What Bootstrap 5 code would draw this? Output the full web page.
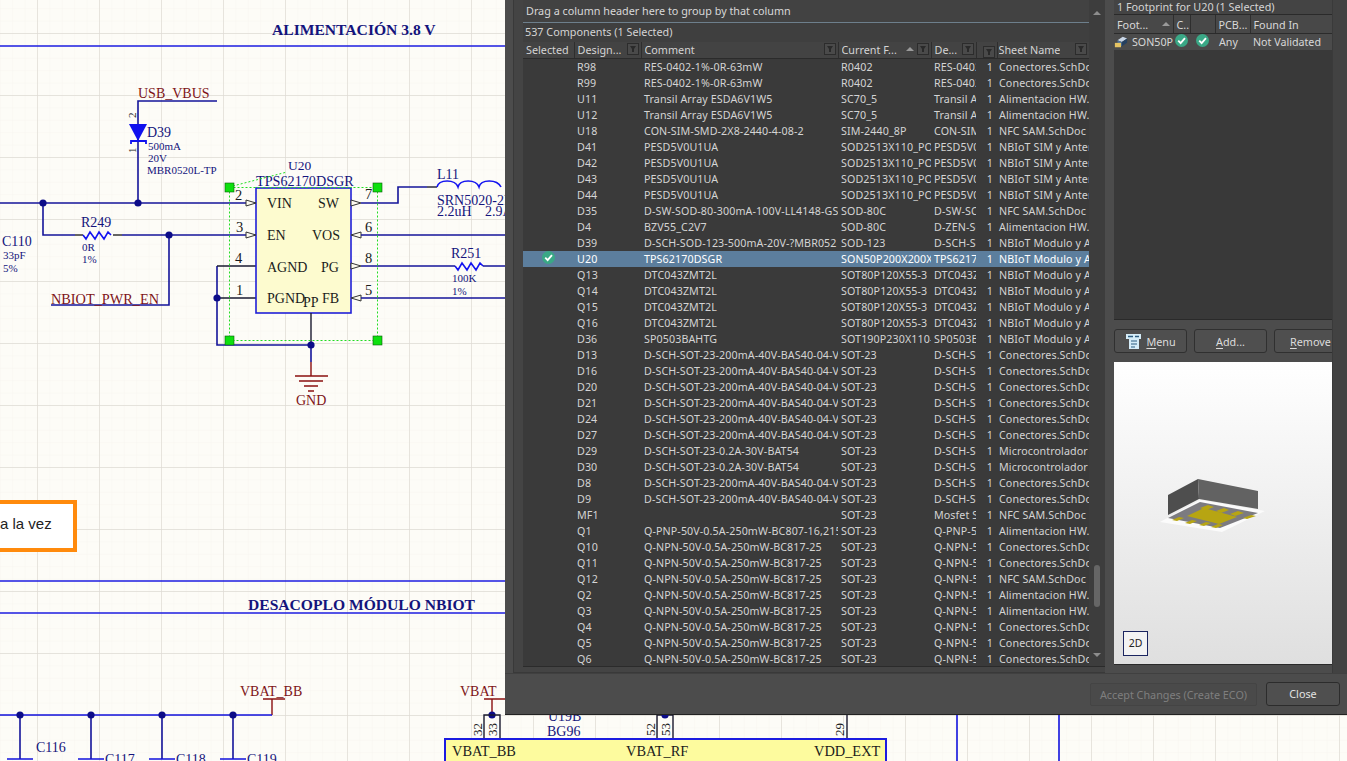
<!DOCTYPE html>
<html lang="en">
<head>
    <meta charset="UTF-8">
    <meta name="viewport" content="width=device-width, initial-scale=1.0">
    <title>Components</title>
    <link href="https://cdn.jsdelivr.net/npm/bootstrap@5.3.0/dist/css/bootstrap.min.css" rel="stylesheet">
    <style>
        html, body { height: 100%; overflow: hidden; background: #fdfbf5; }
        .stage { width: 1347px; height: 761px; overflow: hidden; }
        .sheet { display: block; }
        .sheet text { font-family: "Liberation Serif", serif; }
        .wire { stroke: #15159a; stroke-width: 1.6; fill: none; }
        .wire-b { stroke: #1212dd; stroke-width: 1.6; fill: none; }
        .pin { stroke: #1a1a30; stroke-width: 1.4; fill: none; }
        .rule { stroke: #1c1ce0; stroke-width: 1.6; }
        .node { fill: #0c0c88; }
        .red { stroke: #8a1010; stroke-width: 1.4; fill: none; }
        .t-navy { fill: #14147c; }
        .t-red { fill: #7e1418; }
        .t-blk { fill: #1b1b1b; }
        .handle { fill: #0ee00e; stroke: #0a5a0a; stroke-width: .6; }
        .tick { fill: #fdfbf0; stroke: #333; stroke-width: 1; }

        .dlg { position: absolute; left: 505px; top: 0; width: 842px; height: 715px; background: #4c4c4c; border-bottom: 1px solid #222; font-family: "Noto Sans", sans-serif; font-size: 10.7px; color: #d4d4d4; line-height: 16px; }
        .dlg-main { height: 673px; }
        .left-pane { width: 600px; height: 673px; padding-left: 8px; }
        .left-in { height: 673px; padding: 0 0 8px 9px; background: #444; border-left: 1px solid #393939; border-bottom: 1px solid #393939; width: 592px; }
        .grid-wrap { width: 582px; background: #3a3a3a; border-bottom: 1px solid #2b2b2b; }
        .grid-col { width: 566px; }
        .group-bar { height: 23px; padding: 3px 3px 0; background: #424242; border-bottom: 1px solid #6d7f8c; font-size: 10.8px; color: #d8d8d8; }
        .count-bar { height: 19px; padding: 1px 2px; background: #3f3f3f; font-size: 10.8px; }
        .cmp-table { table-layout: fixed; width: 566px; margin: 0; color: #d4d4d4; --bs-table-bg: transparent; --bs-table-color: #d4d4d4; border-color: transparent; }
        .cmp-table th { height: 16px; padding: 0 2px 0 3px; background: #434343; font-weight: 400; border-left: 1px solid #2e2e2e; border-bottom: 1px solid #2b2b2b; font-size: 10.8px; }
        .cmp-table th:first-child { border-left: 0; }
        .cmp-table th:last-child { padding-left: 1px; }
        .cmp-table td { height: 16px; padding: 0 0 0 3px; white-space: nowrap; overflow: hidden; line-height: 16px; letter-spacing: .1px; }
        .cmp-table td:first-child { padding: 0; }
        .cmp-table td:last-child { padding-left: 2px; }
        .cmp-table tr.picked td { --bs-table-bg: #5c7e9d; --bs-table-color: #fff; background: #5c7e9d; color: #fff; }
        .cmp-table td.num { text-align: right; padding-right: 4px; }
        .cell-clip { white-space: nowrap; overflow: hidden; min-width: 0; }
        .funnel { flex: none; width: 12px; height: 12px; margin-top: 1px; display: block; }
        .sort-up { flex: none; width: 0; height: 0; border: 4px solid transparent; border-top: 0; border-bottom: 4px solid #9a9a9a; margin: 5px 3px 0 0; }
        .rows-box { height: 607px; overflow: hidden; }
        .scroll-col { width: 16px; background: #3d3d3d; }
        .arrow-top { width: 0; height: 0; border: 4px solid transparent; border-top: 0; border-bottom: 4px solid #8d8d8d; margin: 11px auto 0; }
        .thumb { width: 6px; height: 42px; border-radius: 3px; background: #666; margin: 550px auto 0; }
        .arrow-bot { width: 0; height: 0; border: 4px solid transparent; border-bottom: 0; border-top: 4px solid #8d8d8d; margin: 46px auto 0; }

        .right-pane { width: 218px; margin-left: 9px; }
        .right-edge { width: 15px; background: #424242; border-left: 1px solid #3a3a3a; }
        .fp-title { height: 14px; line-height: 14px; padding-left: 3px; background: #444; font-size: 10.8px; }
        .fp-box { height: 306px; background: #393939; border-bottom: 1px solid #2a2a2a; border-top: 1px solid #2a2a2a; }
        .fp-table { table-layout: fixed; width: 218px; margin: 0; --bs-table-bg: transparent; --bs-table-color: #d8d8d8; color: #d8d8d8; }
        .fp-table th { height: 18px; padding: 0 0 0 3px; background: #484848; font-weight: 400; border-left: 1px solid #2e2e2e; border-bottom: 1px solid #2b2b2b; font-size: 10.8px; white-space: nowrap; overflow: hidden; }
        .fp-table th:first-child { border-left: 0; }
        .fp-table td { height: 17px; padding: 0 0 0 3px; background: #4b4b4b; white-space: nowrap; overflow: hidden; line-height: 16px; }
        .fp-btns { height: 42px; padding-top: 9px; width: 221px; overflow: hidden; gap: 7px; }
        .ui-btn { flex: none; width: 73px; height: 24px; padding: 0; background: #4f4f4f; border: 1px solid #303030; border-radius: 3px; color: #dcdcdc; font-size: 10.8px; line-height: 21px; }
        .ui-btn u { text-underline-offset: 2px; }
        .btn-remove { text-align: left; padding-left: 15px; }
        .preview { position: relative; width: 218px; height: 303px; background: linear-gradient(#fff, #dfdfdf); border-bottom: 1px solid #2a2a2a; }
        .preview svg { display: block; }
        .btn-2d { position: absolute; left: 9px; bottom: 8px; width: 25px; height: 25px; background: #f3f3f3; border: 1px solid #1b2560; color: #222; font-size: 10.5px; line-height: 23px; text-align: center; }
        .dlg-foot { height: 41px; padding: 8px 7px 0 0; gap: 9px; background: #4c4c4c; border-top: 1px solid #404040; }
        .btn-accept { width: 167px; height: 23px; margin-top: 1px; background: #4a4a4a; border: 1px solid #444; border-radius: 2px; color: #7f7f7f; font-size: 10.8px; line-height: 20px; padding: 0; }
        .btn-close-dlg { width: 74px; height: 24px; background: #4f4f4f; border: 1px solid #2c2c2c; border-radius: 3px; color: #e2e2e2; font-size: 10.8px; line-height: 20px; padding: 0; }
    </style>
</head>
<body>
<div class="stage position-relative">

    <!-- schematic canvas -->
    <svg class="sheet" width="1347" height="761" viewBox="0 0 1347 761" xmlns="http://www.w3.org/2000/svg">
        <defs>
            <pattern id="gridMinor" x="37" y="33" width="12.4" height="12.4" patternUnits="userSpaceOnUse">
                <path d="M0 0H12.4M0 0V12.4" stroke="#f7f5ef" stroke-width="1" fill="none"/>
            </pattern>
            <pattern id="gridMajor" x="37" y="33" width="62" height="62" patternUnits="userSpaceOnUse">
                <path d="M0 0H62M0 0V62" stroke="#dedbd5" stroke-width="1.4" fill="none"/>
            </pattern>
        </defs>
        <rect width="1347" height="761" fill="#fdfcf7"/>
        <rect width="1347" height="761" fill="url(#gridMinor)"/>
        <rect width="1347" height="761" fill="url(#gridMajor)"/>

        <!-- section rules -->
        <line class="rule" x1="0" y1="46" x2="505" y2="46"/>
        <line class="rule" x1="0" y1="581" x2="505" y2="581"/>
        <line class="rule" x1="0" y1="613" x2="505" y2="613"/>
        <text class="t-navy" x="272" y="35" font-size="15.6" font-weight="700">ALIMENTACIÓN 3.8 V</text>
        <text class="t-navy" x="248" y="610" font-size="15.6" font-weight="700">DESACOPLO MÓDULO NBIOT</text>

        <!-- USB_VBUS and D39 -->
        <text class="t-red" x="138" y="98" font-size="14">USB_VBUS</text>
        <path class="wire" d="M217 101H138V203"/>
        <text class="t-blk" font-size="11" transform="translate(136 118) rotate(-90)">2</text>
        <text class="t-blk" font-size="11" transform="translate(136 153) rotate(-90)">1</text>
        <path d="M129 124H147L138 141Z" fill="#1010ee"/>
        <path d="M131 144V141H146V144" stroke="#1010ee" stroke-width="1.8" fill="none"/>
        <text class="t-navy" x="147" y="137" font-size="14">D39</text>
        <text class="t-navy" x="148" y="150" font-size="11">500mA</text>
        <text class="t-navy" x="148" y="162" font-size="11">20V</text>
        <text class="t-navy" x="147" y="174" font-size="11">MBR0520L-TP</text>

        <!-- supply wires on the left -->
        <path class="wire" d="M0 203H256"/>
        <path class="wire" d="M43 203V235H75"/>
        <path class="wire" d="M122 235H256"/>
        <path class="wire" d="M169 235V305H51"/>
        <path d="M75 235H83M113 235H122" stroke="#333" stroke-width="1.4"/>
        <path d="M83 235l3 4 4-7 5 7 4-7 5 7 4-7 3 3" stroke="#1414f0" stroke-width="1.6" fill="none"/>
        <circle class="node" cx="43" cy="203" r="3.6"/>
        <circle class="node" cx="138" cy="203" r="3.6"/>
        <circle class="node" cx="169" cy="235" r="3.6"/>
        <text class="t-navy" x="81" y="227" font-size="14">R249</text>
        <text class="t-navy" x="82" y="251" font-size="11">0R</text>
        <text class="t-navy" x="82" y="263" font-size="11">1%</text>
        <text class="t-navy" x="2" y="246" font-size="14">C110</text>
        <text class="t-navy" x="3" y="259" font-size="11">33pF</text>
        <text class="t-navy" x="3" y="272" font-size="11">5%</text>
        <text class="t-red" x="51" y="304" font-size="14.3">NBIOT_PWR_EN</text>

        <!-- U20 -->
        <path class="wire" d="M217 266V345H311"/>
        <path class="pin" d="M217 266H256M217 298H256"/>
        <circle class="node" cx="217" cy="298" r="3.6"/>
        <rect x="256" y="188" width="95" height="125" fill="#fdfbcf" stroke="#2020d8" stroke-width="1.6"/>
        <text class="t-navy" x="288" y="170" font-size="13.5">U20</text>
        <text class="t-navy" x="256" y="186" font-size="14.2">TPS62170DSGR</text>
        <g class="t-blk" font-size="14">
            <text x="267" y="208">VIN</text><text x="318" y="208">SW</text>
            <text x="267" y="240">EN</text><text x="312" y="240">VOS</text>
            <text x="267" y="272">AGND</text><text x="321" y="272">PG</text>
            <text x="267" y="303">PGND</text><text x="322" y="303">FB</text>
            <text x="303" y="307">PP</text>
        </g>
        <g class="t-blk" font-size="14.5">
            <text x="235" y="200">2</text><text x="236" y="232">3</text><text x="235" y="263">4</text><text x="236" y="295">1</text>
            <text x="365" y="199">7</text><text x="365" y="232">6</text><text x="365" y="263">8</text><text x="365" y="295">5</text>
        </g>
        <path class="tick" d="M246 200L256 203L246 206Z"/>
        <path class="tick" d="M246 232L256 235L246 238Z"/>
        <path class="tick" d="M351 200L361 203L351 206Z"/>
        <path class="tick" d="M361 232L351 235L361 238Z"/>
        <path class="tick" d="M351 263L361 266L351 269Z"/>
        <path class="tick" d="M361 295L351 298L361 301Z"/>

        <!-- outputs -->
        <path class="wire" d="M361 203H398V187H427"/>
        <path class="pin" d="M427 187H437"/>
        <path d="M437 187c2-8 18-8 21 0c2-8 18-8 21 0c2-8 18-8 22 0" stroke="#1414f0" stroke-width="1.6" fill="none"/>
        <text class="t-navy" x="437" y="179" font-size="14">L11</text>
        <text class="t-navy" x="437" y="205" font-size="14">SRN5020-2R2M</text>
        <text class="t-navy" x="437" y="216" font-size="14">2.2uH</text>
        <text class="t-navy" x="485" y="216" font-size="14">2.9A</text>
        <path class="wire" d="M361 235H505"/>
        <path class="wire" d="M361 266H447"/>
        <path d="M455 266l3 4 4-7 5 7 4-7 5 7 4-7 3 3" stroke="#1414f0" stroke-width="1.6" fill="none"/>
        <path class="wire" d="M447 266H455M483 266H505"/>
        <path class="wire" d="M361 298H505"/>
        <text class="t-navy" x="451" y="258" font-size="14">R251</text>
        <text class="t-navy" x="452" y="282" font-size="11">100K</text>
        <text class="t-navy" x="452" y="295" font-size="11">1%</text>

        <!-- ground -->
        <path class="pin" d="M311 313V345"/>
        <path class="wire" d="M311 345V362"/>
        <path class="red" d="M311 362V376M295 376H328M299 381H323M304 386H318M308 391H314"/>
        <circle class="node" cx="311" cy="345" r="3.6"/>
        <text class="t-red" x="296" y="405" font-size="14">GND</text>

        <!-- selection -->
        <rect x="229.5" y="187.5" width="148" height="153" fill="none" stroke="#22dd22" stroke-width="1" stroke-dasharray="2 2"/>
        <line x1="229" y1="187" x2="287" y2="172" stroke="#22dd22" stroke-width="1" stroke-dasharray="2 2"/>
        <rect class="handle" x="225" y="183" width="9" height="9"/>
        <rect class="handle" x="373" y="183" width="9" height="9"/>
        <rect class="handle" x="225" y="336" width="9" height="9"/>
        <rect class="handle" x="373" y="336" width="9" height="9"/>

        <!-- note -->
        <rect x="-10" y="502" width="85" height="48" fill="#fff" stroke="#ff8a0c" stroke-width="4"/>
        <text x="0" y="529" font-size="15" fill="#222" style="font-family:'Liberation Sans',sans-serif">a la vez</text>

        <!-- decoupling -->
        <text class="t-red" x="240" y="696" font-size="14">VBAT_BB</text>
        <path class="red" d="M263 699H285M272 699V715"/>
        <path class="wire-b" d="M0 715H272"/>
        <path class="wire" d="M20 715V759M91 715V759M162 715V759M233 715V759"/>
        <path class="wire-b" d="M7 759H33M78 759H104M149 759H175M220 759H246"/>
        <circle class="node" cx="20" cy="715" r="3.6"/>
        <circle class="node" cx="91" cy="715" r="3.6"/>
        <circle class="node" cx="162" cy="715" r="3.6"/>
        <circle class="node" cx="233" cy="715" r="3.6"/>
        <text class="t-navy" x="36" y="752" font-size="14">C116</text>
        <text class="t-navy" x="36" y="769" font-size="11">10uF</text>
        <text class="t-navy" x="105" y="764" font-size="14">C117</text>
        <text class="t-navy" x="176" y="764" font-size="14">C118</text>
        <text class="t-navy" x="247" y="764" font-size="14">C119</text>

        <!-- U19B -->
        <text class="t-red" x="460" y="696" font-size="14">VBAT</text>
        <path class="red" d="M484 699H506M492 699V715"/>
        <circle class="node" cx="492" cy="715" r="3.6"/>
        <path class="pin" d="M484 739V715H500V739M657 739V715H673V739M847 739V715"/>
        <circle class="node" cx="665" cy="715" r="3.6"/>
        <g class="t-blk" font-size="13">
            <text transform="translate(482 736) rotate(-90)">32</text>
            <text transform="translate(497 736) rotate(-90)">33</text>
            <text transform="translate(655 736) rotate(-90)">52</text>
            <text transform="translate(670 736) rotate(-90)">53</text>
            <text transform="translate(844 736) rotate(-90)">29</text>
        </g>
        <text class="t-navy" x="548" y="721" font-size="14">U19B</text>
        <text class="t-navy" x="547" y="736" font-size="14">BG96</text>
        <rect x="445" y="739" width="441" height="40" fill="#fdfb9e" stroke="#1c1ce0" stroke-width="2"/>
        <g class="t-blk" font-size="14.4">
            <text x="452" y="756">VBAT_BB</text>
            <text x="626" y="756">VBAT_RF</text>
            <text x="814" y="756">VDD_EXT</text>
        </g>
        <path class="wire-b" d="M957 715V761M1059 715V761"/>
    </svg>

    <!-- components dialog, floats over the schematic -->
    <div class="dlg">
        <div class="dlg-main d-flex">
            <div class="left-pane">
                <div class="left-in">
                    <div class="grid-wrap d-flex">
                        <div class="grid-col">
                            <div class="group-bar">Drag a column header here to group by that column</div>
                            <div class="count-bar">537 Components (1 Selected)</div>
                            <table class="table table-borderless cmp-table">
                                <colgroup><col style="width:51px"><col style="width:67px"><col style="width:197px"><col style="width:93px"><col style="width:45px"><col style="width:21px"><col style="width:92px"></colgroup>
                                <thead>
                                    <tr>
                                        <th>Selected</th>
                                        <th><div class="d-flex justify-content-between"><span class="cell-clip">Design...</span><svg class="funnel"><use href="#funnelIcon"/></svg></div></th>
                                        <th><div class="d-flex justify-content-between"><span class="cell-clip">Comment</span><svg class="funnel"><use href="#funnelIcon"/></svg></div></th>
                                        <th><div class="d-flex justify-content-between"><span class="cell-clip">Current F...</span><span class="d-flex"><span class="sort-up"></span><svg class="funnel"><use href="#funnelIcon"/></svg></span></div></th>
                                        <th><div class="d-flex justify-content-between"><span class="cell-clip">De...</span><svg class="funnel"><use href="#funnelIcon"/></svg></div></th>
                                        <th><div class="d-flex justify-content-end"><svg class="funnel"><use href="#funnelIcon"/></svg></div></th>
                                        <th><div class="d-flex justify-content-between"><span class="cell-clip">Sheet Name</span><svg class="funnel"><use href="#funnelIcon"/></svg></div></th>
                                    </tr>
                                </thead>
                            </table>
                            <div class="rows-box">
                                <table class="table table-borderless cmp-table">
                                    <colgroup><col style="width:51px"><col style="width:67px"><col style="width:197px"><col style="width:93px"><col style="width:45px"><col style="width:21px"><col style="width:92px"></colgroup>
                                    <tbody id="componentRows"></tbody>
                                </table>
                            </div>
                        </div>
                        <div class="scroll-col">
                            <div class="arrow-top"></div>
                            <div class="thumb"></div>
                            <div class="arrow-bot"></div>
                        </div>
                    </div>
                </div>
            </div>

            <div class="right-pane">
                <div class="fp-title">1 Footprint for U20 (1 Selected)</div>
                <div class="fp-box">
                    <table class="table table-borderless fp-table">
                        <colgroup><col style="width:59px"><col style="width:17px"><col style="width:25px"><col style="width:35px"><col style="width:82px"></colgroup>
                        <thead>
                            <tr>
                                <th><div class="d-flex justify-content-between"><span>Foot...</span><span class="sort-up"></span></div></th>
                                <th>C..</th>
                                <th></th>
                                <th>PCB...</th>
                                <th>Found In</th>
                            </tr>
                        </thead>
                        <tbody>
                            <tr>
                                <td class="ps-0">
                                    <div class="d-flex align-items-center">
                                        <svg width="16" height="14" viewBox="0 0 16 14" class="flex-none">
                                            <path d="M4 5L10 1L15 3L9 7Z" fill="#c9d6e6"/>
                                            <path d="M4 5L9 7V12L4 10Z" fill="#4c6f96"/>
                                            <path d="M9 7L15 3V8L9 12Z" fill="#25405f"/>
                                            <rect x="1" y="8" width="7" height="5" fill="#e6c463"/>
                                        </svg>
                                        <span class="ms-1">SON50P</span>
                                    </div>
                                </td>
                                <td class="ps-0"><svg width="13" height="13" class="d-block mx-auto"><use href="#checkIcon"/></svg></td>
                                <td class="ps-0"><svg width="13" height="13" class="d-block mx-auto"><use href="#checkIcon"/></svg></td>
                                <td class="ps-1">Any</td>
                                <td>Not Validated</td>
                            </tr>
                        </tbody>
                    </table>
                </div>
                <div class="fp-btns d-flex">
                    <button class="ui-btn d-flex align-items-center justify-content-center">
                        <svg width="17" height="17" viewBox="0 0 17 17" class="me-1">
                            <path d="M1 1H16V6H14V16H4V6H1Z" fill="#d5ecf8"/>
                            <path d="M3 3.5H8M10 3.5H14" stroke="#2d5d80" stroke-width="1.6"/>
                            <path d="M6 8H12M6 11H12M6 14H10" stroke="#2d5d80" stroke-width="1.2"/>
                        </svg>
                        <span><u>M</u>enu</span>
                    </button>
                    <button class="ui-btn"><u>A</u>dd...</button>
                    <button class="ui-btn btn-remove"><u>R</u>emove</button>
                </div>
                <div class="preview">
                    <svg width="218" height="302" viewBox="1114 362 218 302">
                        <path d="M1160 522L1200 500L1265 511L1222 532Z" fill="#fff" opacity=".75"/>
                        <path d="M1168 495L1198 479L1199 499L1168 515Z" fill="#4e4e4e"/>
                        <path d="M1198 479L1258 491L1258 509L1199 499Z" fill="#626262"/>
                        <path d="M1168 518L1200 502L1258 513L1220 528Z" fill="#7c7b80"/>
                        <path d="M1187 516L1204 508L1237 517L1219 524Z" fill="#b7a512"/>
                        <path d="M1200 508L1208 505L1214 507L1206 510Z" fill="#b7a512"/>
                        <path d="M1216 511L1224 508L1229 510L1221 513Z" fill="#b7a512"/>
                        <path d="M1230 514L1238 511L1244 513L1235 516Z" fill="#b7a512"/>
                        <path d="M1243 518L1251 515L1256 516L1247 519Z" fill="#b7a512"/>
                        <path d="M1172 520L1179 517L1184 518L1177 521Z" fill="#b7a512"/>
                        <path d="M1185 523L1192 520L1197 521L1190 524Z" fill="#b7a512"/>
                        <path d="M1199 525L1206 522L1211 523L1204 526Z" fill="#b7a512"/>
                        <path d="M1211 527L1218 524L1223 525L1216 528Z" fill="#b7a512"/>
                    </svg>
                    <div class="btn-2d">2D</div>
                </div>
            </div>
            <div class="right-edge"></div>
        </div>
        <div class="dlg-foot d-flex justify-content-end">
            <button class="btn-accept" disabled>Accept Changes (Create ECO)</button>
            <button class="btn-close-dlg">Close</button>
        </div>
    </div>

    <!-- shared icons -->
    <svg width="0" height="0" class="position-absolute">
        <symbol id="funnelIcon" viewBox="0 0 12 12">
            <rect x=".5" y=".5" width="11" height="11" fill="#4a4a4a" stroke="#2c2c2c"/>
            <path d="M3 3H9L7 6V9H5V6Z" fill="#2a2a2a"/>
        </symbol>
        <symbol id="checkIcon" viewBox="0 0 12 12">
            <circle cx="6" cy="6" r="6" fill="#3aa886"/>
            <path d="M3 6.2L5.2 8.4L9.2 3.8" stroke="#fff" stroke-width="1.7" fill="none"/>
        </symbol>
    </svg>
</div>

<script>
    const CON = "Conectores.SchDoc", ALIM = "Alimentacion HW.SchDoc", NFC = "NFC SAM.SchDoc";
    const SIM = "NBIoT SIM y Antena", MOD = "NBIoT Modulo y Alim", MCU = "Microcontrolador";
    const BAS = "D-SCH-SOT-23-200mA-40V-BAS40-04-V", BAT = "D-SCH-SOT-23-0.2A-30V-BAT54", NPN = "Q-NPN-50V-0.5A-250mW-BC817-25";
    const RES = "RES-0402-1%-0R-63mW", ARR = "Transil Array ESDA6V1W5", TVS = "PESD5V0U1UA", DTC = "DTC043ZMT2L";
    const SCH = "D-SCH-SO", QN = "Q-NPN-50";

    // id, comment, footprint, description, sheet
    let components = [
        ["R98", RES, "R0402", "RES-0402", CON],
        ["R99", RES, "R0402", "RES-0402", CON],
        ["U11", ARR, "SC70_5", "Transil Ar", ALIM],
        ["U12", ARR, "SC70_5", "Transil Ar", ALIM],
        ["U18", "CON-SIM-SMD-2X8-2440-4-08-2", "SIM-2440_8P", "CON-SIM", NFC],
        ["D41", TVS, "SOD2513X110_PO", "PESD5V0", SIM],
        ["D42", TVS, "SOD2513X110_PO", "PESD5V0", SIM],
        ["D43", TVS, "SOD2513X110_PO", "PESD5V0", SIM],
        ["D44", TVS, "SOD2513X110_PO", "PESD5V0", SIM],
        ["D35", "D-SW-SOD-80-300mA-100V-LL4148-GS", "SOD-80C", "D-SW-SO", NFC],
        ["D4", "BZV55_C2V7", "SOD-80C", "D-ZEN-SO", ALIM],
        ["D39", "D-SCH-SOD-123-500mA-20V-?MBR052", "SOD-123", SCH, MOD],
        ["U20", "TPS62170DSGR", "SON50P200X200X", "TPS62170", MOD],
        ["Q13", DTC, "SOT80P120X55-3", "DTC043Z", MOD],
        ["Q14", DTC, "SOT80P120X55-3", "DTC043Z", MOD],
        ["Q15", DTC, "SOT80P120X55-3", "DTC043Z", MOD],
        ["Q16", DTC, "SOT80P120X55-3", "DTC043Z", MOD],
        ["D36", "SP0503BAHTG", "SOT190P230X110-", "SP0503B", MOD],
        ["D13", BAS, "SOT-23", SCH, CON],
        ["D16", BAS, "SOT-23", SCH, CON],
        ["D20", BAS, "SOT-23", SCH, CON],
        ["D21", BAS, "SOT-23", SCH, CON],
        ["D24", BAS, "SOT-23", SCH, CON],
        ["D27", BAS, "SOT-23", SCH, CON],
        ["D29", BAT, "SOT-23", SCH, MCU],
        ["D30", BAT, "SOT-23", SCH, MCU],
        ["D8", BAS, "SOT-23", SCH, CON],
        ["D9", BAS, "SOT-23", SCH, CON],
        ["MF1", "", "SOT-23", "Mosfet S", NFC],
        ["Q1", "Q-PNP-50V-0.5A-250mW-BC807-16,215", "SOT-23", "Q-PNP-50", ALIM],
        ["Q10", NPN, "SOT-23", QN, CON],
        ["Q11", NPN, "SOT-23", QN, CON],
        ["Q12", NPN, "SOT-23", QN, NFC],
        ["Q2", NPN, "SOT-23", QN, ALIM],
        ["Q3", NPN, "SOT-23", QN, ALIM],
        ["Q4", NPN, "SOT-23", QN, CON],
        ["Q5", NPN, "SOT-23", QN, CON],
        ["Q6", NPN, "SOT-23", QN, CON]
    ];

    function loadComponents() {
        let tbody = document.getElementById("componentRows");
        components.forEach(c => {
            let row = document.createElement("tr");
            let isPicked = c[0] === "U20";
            if (isPicked) row.className = "picked";
            row.innerHTML = `
                <td>${isPicked ? '<svg width="13" height="13" class="d-block mx-auto"><use href="#checkIcon"/></svg>' : ''}</td>
                <td>${c[0]}</td>
                <td>${c[1]}</td>
                <td>${c[2]}</td>
                <td>${c[3]}</td>
                <td class="num">1</td>
                <td>${c[4]}</td>
            `;
            tbody.appendChild(row);
        });
    }
    loadComponents();
</script>
<script src="https://cdn.jsdelivr.net/npm/bootstrap@5.3.0/dist/js/bootstrap.bundle.min.js"></script>
</body>
</html>
